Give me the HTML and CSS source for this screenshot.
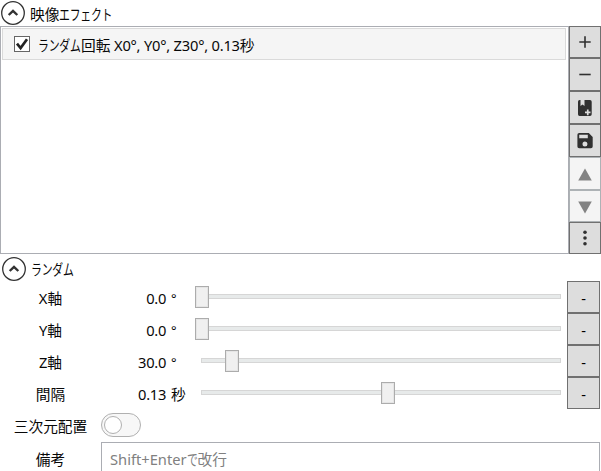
FILE: index.html
```
<!DOCTYPE html>
<html lang="ja">
<head>
<meta charset="utf-8">
<title>映像エフェクト</title>
<link rel="stylesheet" href="styles.css">
</head>
<body>
<header class="section-head">
  <svg class="expander" viewBox="0 0 24 24"><circle cx="12" cy="12" r="11.3"/><path d="M7.7 14 12 9.9l4.3 4.1"/></svg>
  <h2>映像<span class="kana k5">エフェクト</span></h2>
</header>
<section class="effects">
  <div class="list">
    <div class="item">
      <svg class="check" viewBox="0 0 16 16"><rect x=".5" y=".5" width="15" height="15"/><path d="M3 7.7 6.6 12 13 3.3"/></svg>
      <span class="item-text"><span class="kana k4">ランダム</span>回転<span class="latin"> X0°, Y0°, Z30°, 0.13</span>秒</span>
    </div>
  </div>
  <div class="tools">
    <button><svg viewBox="0 0 16 16"><path class="line" d="M8 2.3v11.4M2.3 8h11.4"/></svg></button>
    <button><svg viewBox="0 0 16 16"><path class="line" d="M2.3 7.5h11.4"/></svg></button>
    <button><svg viewBox="0 0 16 16"><path fill-rule="evenodd" d="M2.5 0h1v6l2-1.4 2 1.4v-6H13q1.7 0 1.7 1.7v12.5q0 1.7-1.7 1.7H2.5Q1 15.9 1 14.2V1.7Q1 0 2.5 0ZM9.9 9.500v2H8v1.700h1.900v2h1.700v-2h1.900v-1.700h-1.900v-2Z"/></svg></button>
    <button><svg viewBox="0 0 16 16"><path fill-rule="evenodd" d="M2.200 0h9.600L15.700 3.900v9.600q0 1.800-1.800 1.800H2.200Q.4 15.300.4 13.500V1.800Q.4 0 2.200 0ZM2.200 1.800v3.500h8.600V1.800ZM8 8.600a2.500 2.500 0 1 0 0 5 2.500 2.500 0 0 0 0-5Z"/></svg></button>
    <button disabled><svg viewBox="0 0 16 16"><path d="M8 2.500 14.800 14.500H1.200Z"/></svg></button>
    <button disabled><svg viewBox="0 0 16 16"><path d="M8 15.500 1.200 3.500h13.600Z"/></svg></button>
    <button><svg viewBox="0 0 16 16"><circle cx="8" cy="2.200" r="1.800"/><circle cx="8" cy="8" r="1.800"/><circle cx="8" cy="13.800" r="1.800"/></svg></button>
  </div>
</section>
<header class="section-head second">
  <svg class="expander" viewBox="0 0 24 24"><circle cx="12" cy="12" r="11.3"/><path d="M7.700 14 12 9.900l4.300 4.100"/></svg>
  <h2><span class="kana k4">ランダム</span></h2>
</header>
<section class="props">
  <div class="row"><label>X軸</label><span class="value">0.0</span><span class="unit deg">°</span><div class="slider"><div class="thumb" style="margin-left:0px"></div></div><button>-</button></div>
  <div class="row"><label>Y軸</label><span class="value">0.0</span><span class="unit deg">°</span><div class="slider"><div class="thumb" style="margin-left:0px"></div></div><button>-</button></div>
  <div class="row"><label>Z軸</label><span class="value">30.0</span><span class="unit deg">°</span><div class="slider"><div class="thumb" style="margin-left:30px"></div></div><button>-</button></div>
  <div class="row"><label>間隔</label><span class="value">0.13</span><span class="unit">秒</span><div class="slider"><div class="thumb" style="margin-left:186px"></div></div><button>-</button></div>
  <div class="row"><label>三次元配置</label><div class="toggle"><div class="knob"></div></div></div>
  <div class="row memo"><label>備考</label><div class="textbox">Shift+Enter<span class="kana k1">で</span>改行</div></div>
</section>
</body>
</html>
```
FILE: styles.css
```
* { box-sizing: border-box; }
body {
  margin: 0;
  width: 601px;
  height: 471px;
  overflow: hidden;
  background: #fff;
  color: #080808;
  font: 14.7px/20px "Noto Sans", "Noto Sans CJK JP", sans-serif;
  white-space: nowrap;
}
.section-head { display: flex; align-items: center; height: 26px; padding-left: 1px; }
.section-head h2 { margin: 1px 0 0 5px; font-size: inherit; font-weight: 400; }
.second { height: 27px; padding: 2px 0 0 2px; }
.expander { width: 24px; height: 24px; fill: none; stroke: #333; stroke-width: 1.3; }
.expander path { stroke-width: 2.4; }
.kana { display: inline-block; transform: scaleX(.74); transform-origin: 0 50%; letter-spacing: -0.3px; }
.k5 { width: 52px; }
.k4 { width: 43px; }
.k1 { width: 11px; }
.effects { display: flex; height: 228px; }
.list { width: 569px; padding: 1px; border: 1px solid #abadb3; }
.item {
  display: flex;
  align-items: center;
  height: 32px;
  width: 564px;
  padding-left: 11px;
  border: 1px solid #dadada;
  background: #f5f5f5;
}
.check { width: 16px; height: 16px; margin-bottom: 1px; fill: #fff; stroke: #666; }
.check path { fill: none; stroke: #222; stroke-width: 2.7; }
.item-text { margin: 1px 0 0 8px; }
.latin { letter-spacing: -0.22px; }
.tools { display: grid; grid-template-rows: 32px 33px 33px 33px 33px 32px 32px; width: 32px; }
button {
  display: flex;
  align-items: center;
  justify-content: center;
  padding: 0;
  border: 1px solid #707070;
  background: #ddd;
  color: #000;
  font: inherit;
}
button svg { width: 16px; height: 16px; fill: #303030; }
button .line { stroke: #303030; stroke-width: 1.6; }
button:disabled { border-color: #adb2b5; background: #f4f4f4; }
button:disabled svg { fill: #838383; }
.row { display: flex; align-items: center; height: 32px; }
.row label { width: 101px; padding-top: 1px; text-align: center; }
.value { width: 65px; padding-top: 1px; text-align: right; letter-spacing: -0.3px; }
.unit { width: 29px; padding: 1px 0 0 5px; }
.deg { font-size: 13px; }
.slider {
  display: flex;
  align-items: center;
  width: 372px;
  height: 22px;
  background:
    linear-gradient(#e7eaea, #e7eaea) 7px 9px / 358px 3px no-repeat,
    linear-gradient(#d6d6d6, #d6d6d6) 6px 8px / 360px 5px no-repeat;
}
.thumb { width: 14px; height: 22px; border: 1px solid #acacac; background: #f0f0f0; box-shadow: inset 0 0 0 1px #e5e5e5; }
.row button { width: 33px; height: 32px; padding-top: 1px; }
.toggle { display: flex; align-items: center; width: 40px; height: 24px; padding-left: 2px; border: 1px solid #b0b0b0; border-radius: 12px; background: #f7f7f7; }
.knob { width: 18px; height: 18px; border: 1px solid #b0b0b0; border-radius: 50%; background: #fff; }
.memo { height: 34px; margin-top: 1px; }
.memo label { padding-top: 0; }
.textbox { width: 499px; height: 34px; padding: 6px 8px 0; border: 1px solid #abadb3; color: #808080; }
```
